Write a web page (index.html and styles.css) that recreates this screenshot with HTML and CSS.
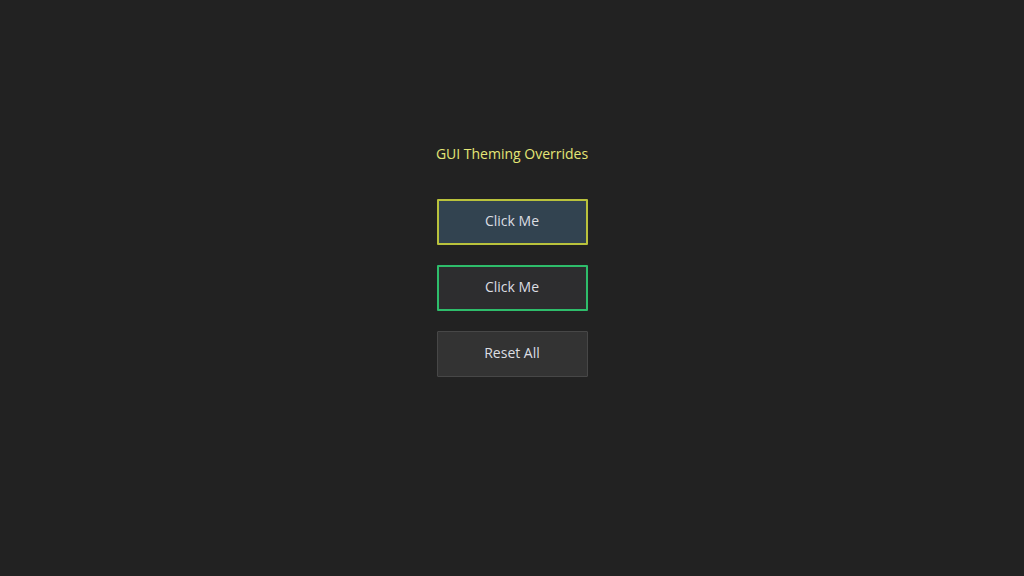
FILE: index.html
```html
<!DOCTYPE html>
<html>
<head>
<meta charset="utf-8">
<link rel="stylesheet" href="styles.css">
</head>
<body>
<main class="panel">
  <div class="title">GUI Theming Overrides</div>
  <button class="btn btn-yellow">Click Me</button>
  <button class="btn btn-green">Click Me</button>
  <button class="btn btn-plain">Reset All</button>
</main>
</body>
</html>
```
FILE: styles.css
```css
html, body {
  margin: 0;
  padding: 0;
  width: 1024px;
  height: 576px;
  background: #222222;
  overflow: hidden;
}
.panel {
  display: flex;
  flex-direction: column;
  align-items: center;
  padding-top: 143px;
  font-family: "Open Sans", "Noto Sans", sans-serif;
  font-size: 14px;
}
.title {
  color: #e4e676;
  line-height: 22px;
  margin-bottom: 34px;
}
.btn {
  box-sizing: border-box;
  width: 151px;
  height: 46px;
  margin: 0 0 20px 0;
  padding: 0 0 4px 0;
  font-family: inherit;
  font-size: 14px;
  color: #dcdee2;
  border-radius: 1px;
}
.btn-yellow {
  background: #324350;
  border: 2px solid #b9c23c;
}
.btn-green {
  background: #2d2d2f;
  border: 2px solid #2ebd6b;
}
.btn-plain {
  background: #333333;
  border: 1px solid #474747;
}
```
